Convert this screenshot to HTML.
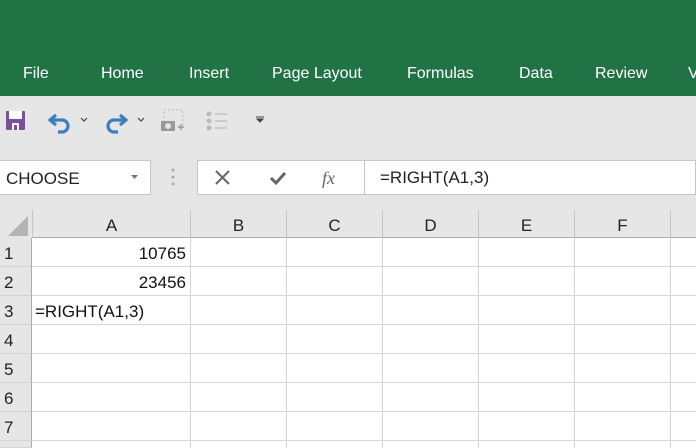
<!DOCTYPE html>
<html><head><style>
*{margin:0;padding:0;box-sizing:border-box}
html,body{width:696px;height:448px;overflow:hidden}
body{background:#e6e6e6;font-family:"Liberation Sans",sans-serif;position:relative}
.a{position:absolute}
.tab{position:absolute;top:65px;color:#fff;font-size:16px}
.col{position:absolute;top:210px;height:28px;border-left:1px solid #c6c6c6;border-bottom:1px solid #ababab;font-size:17px;text-align:center;line-height:31px;color:#222}
.rh{position:absolute;left:0;width:32px;height:29px;border-bottom:1px solid #d4d4d4;border-right:1px solid #ababab;font-size:17px;line-height:32px;padding-left:4px;color:#222;background:#e6e6e6}
.v{position:absolute;font-size:17px;line-height:32px;color:#111}
</style></head><body>
<div class="a" style="left:0;top:0;width:696px;height:96px;background:#217346"></div>
<div class="tab" style="left:23px">File</div>
<div class="tab" style="left:101px">Home</div>
<div class="tab" style="left:189px">Insert</div>
<div class="tab" style="left:272px">Page Layout</div>
<div class="tab" style="left:407px">Formulas</div>
<div class="tab" style="left:519px">Data</div>
<div class="tab" style="left:595px">Review</div>
<div class="tab" style="left:688px">V</div>

<svg class="a" style="left:0;top:105px" width="280" height="32">
<rect x="6" y="6" width="19" height="19" rx="1" fill="#7a4ea0"/>
<rect x="9" y="6" width="13" height="8" fill="#fff"/>
<rect x="12" y="18" width="7" height="7" fill="#fff"/>
<rect x="14" y="20" width="3" height="5" fill="#7a4ea0"/>
<path d="M56 10 L50 15 L56 20 M50 15 H62 a6 6 0 0 1 0 12 H58" fill="none" stroke="#3d7ec2" stroke-width="3.2"/>
<path d="M81 13 l3 3 l3 -3" fill="none" stroke="#444" stroke-width="1.2"/>
<path d="M120 10 L126 15 L120 20 M126 15 H114 a6 6 0 0 0 0 12 H118" fill="none" stroke="#3d7ec2" stroke-width="3.2"/>
<path d="M138 13 l3 3 l3 -3" fill="none" stroke="#444" stroke-width="1.2"/>
<rect x="164" y="5" width="19" height="17" fill="none" stroke="#bbb" stroke-dasharray="2 2"/>
<rect x="161" y="16" width="14" height="10" fill="#999"/><circle cx="168" cy="21" r="3" fill="#e6e6e6"/>
<path d="M178 22 h6 M181 19 v6" stroke="#999" stroke-width="1.5"/>
<circle cx="209" cy="9" r="2.5" fill="#bbb"/><circle cx="209" cy="16" r="2.5" fill="#bbb"/><circle cx="209" cy="23" r="2.5" fill="#bbb"/>
<path d="M215 9h12M215 16h12M215 23h12" stroke="#bbb" stroke-width="1.2"/>
<path d="M256 12h8M257 14h6l-3 3z" stroke="#444" fill="#444" stroke-width="1"/>
</svg>

<div class="a" style="left:0;top:160px;width:151px;height:35px;background:#fff;border:1px solid #c6c6c6;border-left:none;font-size:17px;line-height:36px;padding-left:6px;color:#222">CHOOSE</div>
<svg class="a" style="left:130px;top:174px" width="10" height="6"><path d="M1 1h7l-3.5 4z" fill="#777"/></svg>
<svg class="a" style="left:170px;top:167px" width="6" height="22"><circle cx="3" cy="3" r="1.5" fill="#aaa"/><circle cx="3" cy="10" r="1.5" fill="#aaa"/><circle cx="3" cy="17" r="1.5" fill="#aaa"/></svg>
<div class="a" style="left:197px;top:160px;width:499px;height:35px;background:#fff;border:1px solid #c6c6c6"></div>
<svg class="a" style="left:210px;top:165px" width="150" height="26">
<path d="M6 6l13 13M19 6L6 19" stroke="#666" stroke-width="2"/>
<path d="M61 13l5 5l9 -10" fill="none" stroke="#666" stroke-width="3"/>
<text x="112" y="19" font-family="Liberation Serif" font-style="italic" font-size="18" fill="#666">fx</text>
</svg>
<div class="a" style="left:364px;top:160px;width:1px;height:35px;background:#c6c6c6"></div>
<div class="a" style="left:380px;top:160px;font-size:17px;line-height:36px;color:#222">=RIGHT(A1,3)</div>

<div class="a" style="left:32px;top:238px;width:664px;height:210px;background:#fff"></div>
<svg class="a" style="left:0;top:210px" width="32" height="28"><path d="M8 26L28 26L28 6z" fill="#b4b4b4"/></svg>
<div class="col" style="left:32px;width:158px">A</div>
<div class="col" style="left:190px;width:96px">B</div>
<div class="col" style="left:286px;width:96px">C</div>
<div class="col" style="left:382px;width:96px">D</div>
<div class="col" style="left:478px;width:96px">E</div>
<div class="col" style="left:574px;width:96px">F</div>
<div class="col" style="left:670px;width:26px"></div>
<svg class="a" style="left:32px;top:238px" width="664" height="210">
<g stroke="#d4d4d4" stroke-width="1">
<path d="M158.5 0V210M254.5 0V210M350.5 0V210M446.5 0V210M542.5 0V210M638.5 0V210"/>
<path d="M0 28.5H664M0 57.5H664M0 86.5H664M0 115.5H664M0 144.5H664M0 173.5H664M0 202.5H664"/>
</g></svg>
<div class="rh" style="top:238px">1</div>
<div class="rh" style="top:267px">2</div>
<div class="rh" style="top:296px">3</div>
<div class="rh" style="top:325px">4</div>
<div class="rh" style="top:354px">5</div>
<div class="rh" style="top:383px">6</div>
<div class="rh" style="top:412px">7</div>
<div class="rh" style="top:441px;height:7px"></div>
<div class="v" style="left:32px;top:238px;width:154px;text-align:right">10765</div>
<div class="v" style="left:32px;top:267px;width:154px;text-align:right">23456</div>
<div class="v" style="left:35px;top:296px">=RIGHT(A1,3)</div>
</body></html>
